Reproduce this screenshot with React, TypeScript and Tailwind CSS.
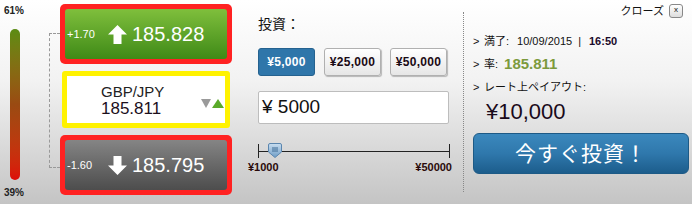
const sans = "font-['Liberation_Sans','Noto_Sans_CJK_JP',sans-serif]";

function ArrowUp() {
  return (
    <svg width="19" height="19" viewBox="0 0 19 19">
      <path d="M9.5 0 L19 9.5 L13.5 9.5 L13.5 19 L5.5 19 L5.5 9.5 L0 9.5 Z" fill="#fff" />
    </svg>
  );
}

function ArrowDown() {
  return (
    <svg width="19" height="19" viewBox="0 0 19 19">
      <path d="M9.5 19 L19 9.5 L13.5 9.5 L13.5 0 L5.5 0 L5.5 9.5 L0 9.5 Z" fill="#fff" />
    </svg>
  );
}

function Thumb() {
  return (
    <svg width="14" height="15" viewBox="0 0 14 15">
      <defs>
        <linearGradient id="tg" x1="0" y1="0" x2="0" y2="1">
          <stop offset="0" stopColor="#c9def0" />
          <stop offset="1" stopColor="#6d9cc6" />
        </linearGradient>
      </defs>
      <path d="M2 0.5 H12 Q13.5 0.5 13.5 2 V9 L7 14.5 L0.5 9 V2 Q0.5 0.5 2 0.5 Z" fill="url(#tg)" stroke="#5b86ae" />
      <path d="M5 4 V9 M7 4 V9 M9 4 V9" stroke="#3d6a94" strokeWidth="1" />
    </svg>
  );
}

function PriceBox({ up }: { up: boolean }) {
  return (
    <div className="h-[60px] w-[172px] rounded-[5px] bg-[#ff2222] p-[5px]">
      <div
        className={
          "flex h-full items-center rounded-[3px] pl-[2px] text-white " +
          (up
            ? "bg-gradient-to-b from-[#7fbf3c] to-[#3e8a16]"
            : "bg-gradient-to-b from-[#858585] to-[#4d4d4d]")
        }
      >
        <span className="w-[41px] text-[11px]">{up ? "+1.70" : "-1.60"}</span>
        <span className="flex w-[24px]">{up ? <ArrowUp /> : <ArrowDown />}</span>
        <span className="text-[20px] leading-none">{up ? "185.828" : "185.795"}</span>
      </div>
    </div>
  );
}

export default function App() {
  return (
    <div
      className={
        "flex h-[204px] w-[692px] overflow-hidden bg-[linear-gradient(to_bottom,#ffffff_0%,#f2f2f2_40%,#c4c4c4_100%)] text-[#111] " +
        sans
      }
    >
      {/* percentage bar */}
      <div className="flex w-[49px] flex-col">
        <div className="pl-[4px] pt-[5px] text-[10px] font-bold leading-[12px] text-[#222]">61%</div>
        <div className="ml-[10px] mt-[12px] h-[151px] w-[10px] rounded-full bg-gradient-to-b from-[#5a8c14] via-[#9a4a12] to-[#dd0a0a]" />
        <div className="pl-[4px] pt-[7px] text-[10px] font-bold leading-[12px] text-[#222]">39%</div>
      </div>

      {/* bracket */}
      <div className="w-[11px] pt-[33px]">
        <div className="h-[135px] border-y border-l border-dashed border-[#999]" />
      </div>

      {/* price boxes */}
      <div className="flex w-[172px] flex-col gap-[7px] pt-[4px]">
        <PriceBox up />
        <div className="mx-[2px] h-[57px] rounded-[3px] bg-[#fff200] p-[5px]">
          <div className="flex h-full items-center bg-white pl-[34px] pr-[1px]">
            <div className="flex-1 pt-[1px] text-[#222]">
              <div className="text-[15px] leading-[17px]">GBP/JPY</div>
              <div className="text-[17px] leading-[18px] text-[#1c0f1c]">185.811</div>
            </div>
            <svg width="23" height="9" viewBox="0 0 23 9" className="mt-[8px]">
              <path d="M0 0 H10 L5 9 Z" fill="#9a9a9a" />
              <path d="M17 0 L23 9 H11 Z" fill="#5aaa2a" />
            </svg>
          </div>
        </div>
        <PriceBox up={false} />
      </div>

      {/* invest controls */}
      <div className="ml-[26px] flex w-[194px] flex-col pt-[16px]">
        <div className="text-[14px] leading-[16px]">投資：</div>
        <div className="mt-[16px] flex gap-[9px]">
          <button className="h-[28px] w-[57px] rounded-[3px] border border-[#25628f] bg-[#2f76aa] text-[12px] font-bold tracking-[0.3px] text-white">
            ¥5,000
          </button>
          <button className="h-[28px] w-[57px] rounded-[3px] border border-[#b0b0b0] bg-gradient-to-b from-white to-[#e6e6e6] text-[12px] font-bold tracking-[0.3px] text-[#1a0a14] shadow-[1px_1px_1px_rgba(0,0,0,0.25)]">
            ¥25,000
          </button>
          <button className="h-[28px] w-[57px] rounded-[3px] border border-[#b0b0b0] bg-gradient-to-b from-white to-[#e6e6e6] text-[12px] font-bold tracking-[0.3px] text-[#1a0a14] shadow-[1px_1px_1px_rgba(0,0,0,0.25)]">
            ¥50,000
          </button>
        </div>
        <div className="mt-[15px] flex h-[33px] w-[191px] items-center rounded-[2px] border border-[#bdbdbd] bg-white pl-[3px] text-[19px] text-[#111]">
          ¥ 5000
        </div>
        <div className="mt-[20px] flex h-[14px] w-[192px] items-center">
          <div className="h-[14px] w-px bg-[#222]" />
          <div className="relative h-px flex-1 bg-[#222]">
            <div className="absolute left-[9px] top-[-8px]">
              <Thumb />
            </div>
          </div>
          <div className="h-[14px] w-px bg-[#222]" />
        </div>
        <div className="ml-[-10px] mt-[3px] flex w-[204px] justify-between text-[11px] font-bold leading-[12px] text-[#2a0a0a]">
          <span>¥1000</span>
          <span>¥50000</span>
        </div>
      </div>

      {/* summary */}
      <div className="ml-[11px] flex flex-1">
        <div className="mt-[12px] h-[180px] border-l border-dotted border-[#888]" />
        <div className="flex flex-1 flex-col pl-[9px]">
          <div className="mt-[4px] flex h-[14px] items-center justify-end gap-[5px] pr-[9px]">
            <span className="text-[11px]">クローズ</span>
            <span className="flex h-[14px] w-[14px] items-start justify-center rounded-[3px] border border-[#888] bg-gradient-to-b from-white to-[#ddd] text-[8px] leading-[9px]">
              x
            </span>
          </div>
          <div className="mt-[16px] flex h-[14px] items-center text-[11px]">
            <span className="w-[11px]">&gt;</span>
            <span>満了:</span>
            <span className="ml-[8px]">10/09/2015</span>
            <span className="ml-[6px]">|</span>
            <span className="ml-[8px] font-bold text-[#1a0a2a]">16:50</span>
          </div>
          <div className="mt-[8px] flex h-[16px] items-center text-[11px]">
            <span className="w-[11px]">&gt;</span>
            <span>率:</span>
            <span className="ml-[6px] text-[15px] font-bold text-[#7c9a3c]">185.811</span>
          </div>
          <div className="mt-[8px] flex h-[14px] items-center text-[11px]">
            <span className="w-[11px]">&gt;</span>
            <span>レート上ペイアウト:</span>
          </div>
          <div className="mt-[6px] h-[24px] pl-[13px] text-[22px] leading-[24px] text-[#1a0a1a]">¥10,000</div>
          <button className="mt-[9px] h-[41px] w-[216px] rounded-[6px] border border-[#1d5a86] bg-gradient-to-b from-[#3b88bd] via-[#2f78ac] to-[#1c5d8c] text-[21px] tracking-[1px] text-white">
            今すぐ投資！
          </button>
        </div>
      </div>
    </div>
  );
}
